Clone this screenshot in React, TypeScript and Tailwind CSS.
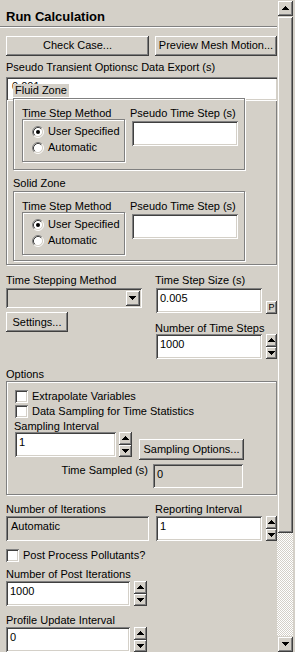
import React from "react";

const RAISED =
  "shadow-[inset_-1px_-1px_#404040,inset_1px_1px_#ffffff,inset_-2px_-2px_#808080,inset_2px_2px_#d4d0c8]";
const RAISED_SB =
  "shadow-[inset_1px_1px_#d4d0c8,inset_-1px_-1px_#404040,inset_2px_2px_#ffffff,inset_-2px_-2px_#808080]";
const SUNKEN =
  "shadow-[inset_1px_1px_#808080,inset_-1px_-1px_#ffffff,inset_2px_2px_#404040,inset_-2px_-2px_#d4d0c8]";
const ETCHED = "border border-[#808080] shadow-[inset_1px_1px_#ffffff,1px_1px_#ffffff]";

function ArrowUp() {
  return (
    <svg width="7" height="4" viewBox="0 0 7 4" shapeRendering="crispEdges" fill="#000">
      <rect x="3" y="0" width="1" height="1" />
      <rect x="2" y="1" width="3" height="1" />
      <rect x="1" y="2" width="5" height="1" />
      <rect x="0" y="3" width="7" height="1" />
    </svg>
  );
}

function ArrowDown() {
  return (
    <svg width="7" height="4" viewBox="0 0 7 4" shapeRendering="crispEdges" fill="#000">
      <rect x="0" y="0" width="7" height="1" />
      <rect x="1" y="1" width="5" height="1" />
      <rect x="2" y="2" width="3" height="1" />
      <rect x="3" y="3" width="1" height="1" />
    </svg>
  );
}

function Spinner({ className }: { className: string }) {
  return (
    <div className={`flex flex-col shrink-0 ${className}`}>
      <div className={`flex-1 flex items-center justify-center bg-[#d4d0c8] ${RAISED}`}>
        <ArrowUp />
      </div>
      <div className={`flex-1 flex items-center justify-center bg-[#d4d0c8] ${RAISED}`}>
        <ArrowDown />
      </div>
    </div>
  );
}

function Field({
  className,
  children,
  disabled,
}: {
  className: string;
  children?: React.ReactNode;
  disabled?: boolean;
}) {
  return (
    <div
      className={`shrink-0 pl-[4px] pt-[4px] leading-[13px] whitespace-nowrap ${
        disabled ? "bg-[#d4d0c8]" : "bg-white"
      } ${SUNKEN} ${className}`}
    >
      {children}
    </div>
  );
}

function Radio({ checked }: { checked?: boolean }) {
  return (
    <svg width="12" height="12" viewBox="0 0 12 12" className="shrink-0">
      <circle cx="6" cy="6" r="4.5" fill="#fff" />
      <path d="M2.11 9.89 A5.5 5.5 0 0 1 9.89 2.11" fill="none" stroke="#808080" strokeWidth="1" />
      <path d="M9.89 2.11 A5.5 5.5 0 0 1 2.11 9.89" fill="none" stroke="#ffffff" strokeWidth="1" />
      <path d="M2.82 9.18 A4.5 4.5 0 0 1 9.18 2.82" fill="none" stroke="#404040" strokeWidth="1" />
      <path d="M9.18 2.82 A4.5 4.5 0 0 1 2.82 9.18" fill="none" stroke="#d4d0c8" strokeWidth="1" />
      {checked && <circle cx="6" cy="6" r="2" fill="#000" />}
    </svg>
  );
}

function Checkbox() {
  return <div className={`w-[13px] h-[13px] bg-white shrink-0 ${SUNKEN}`} />;
}

function ZoneGroup({ className }: { className: string }) {
  return (
    <div className={`relative bg-[#d4d0c8] w-[232px] pt-[8px] pl-[8px] flex ${ETCHED} ${className}`}>
      <div className="flex flex-col">
        <div className="h-[12px] leading-[12px] whitespace-nowrap">Time Step Method</div>
        <div className={`w-[103px] h-[43px] pt-[4px] pl-[9px] flex flex-col ${ETCHED}`}>
          <div className="h-[16px] flex items-center gap-[4px] whitespace-nowrap">
            <Radio checked />
            <span className="leading-[13px]">User Specified</span>
          </div>
          <div className="h-[16px] flex items-center gap-[4px] whitespace-nowrap">
            <Radio />
            <span className="leading-[13px]">Automatic</span>
          </div>
        </div>
      </div>
      <div className="flex flex-col ml-[5px]">
        <div className="h-[12px] leading-[12px] whitespace-nowrap">Pseudo Time Step (s)</div>
        <Field className="mt-[2px] ml-[2px] w-[106px] h-[25px]" />
      </div>
    </div>
  );
}

function Button({ className, children }: { className: string; children: React.ReactNode }) {
  return (
    <div
      className={`shrink-0 flex items-center justify-center whitespace-nowrap leading-[13px] bg-[#d4d0c8] ${RAISED} ${className}`}
    >
      {children}
    </div>
  );
}

export default function App() {
  return (
    <div className="w-[295px] h-[652px] overflow-hidden bg-[#d4d0c8] flex font-['Liberation_Sans',Arial,sans-serif] text-[11px] text-black">
      <div className="w-[277px] shrink-0 flex flex-col items-start overflow-hidden">
        {/* Title */}
        <div className="h-[26px] pl-[6px] pt-[9px] text-[13px] font-bold leading-[16px] whitespace-nowrap">
          Run Calculation
        </div>
        <div className="w-[277px] h-px bg-[#808080]" />
        <div className="w-[277px] h-px bg-white" />

        {/* Buttons */}
        <div className="mt-[8px] pl-[6px] flex gap-[6px]">
          <Button className="w-[143px] h-[20px]">Check Case...</Button>
          <Button className="w-[122px] h-[20px]">Preview Mesh Motion...</Button>
        </div>

        <div className="mt-[5px] pl-[6px] h-[13px] leading-[13px] whitespace-nowrap">
          Pseudo Transient Optionsc Data Export (s)
        </div>

        {/* Pseudo transient group */}
        <div className={`mt-[3px] ml-[6px] w-[271px] h-[192px] relative pt-[20px] pl-[6px] flex flex-col items-start ${ETCHED}`}>
          <div
            className={`absolute -left-px -top-px w-[272px] h-[24px] bg-white pl-[6px] pt-[3px] leading-[13px] ${SUNKEN}`}
          >
            0.001
          </div>
          <div className="absolute left-[6px] top-[6px] px-[2px] h-[13px] leading-[13px] bg-[#d4d0c8] whitespace-nowrap">
            Fluid Zone
          </div>
          <ZoneGroup className="h-[72px]" />
          <div className="mt-[7px] h-[13px] leading-[13px] whitespace-nowrap">Solid Zone</div>
          <ZoneGroup className="mt-[1px] h-[70px]" />
        </div>

        {/* Time stepping */}
        <div className="mt-[9px] pl-[6px] flex">
          <div className="w-[149px] flex flex-col items-start">
            <div className="h-[14px] leading-[13px] whitespace-nowrap">Time Stepping Method</div>
            <div className={`w-[136px] h-[20px] bg-[#d4d0c8] flex items-center justify-end pr-[2px] ${SUNKEN}`}>
              <div className={`w-[15px] h-[16px] flex items-center justify-center bg-[#d4d0c8] ${RAISED_SB}`}>
                <ArrowDown />
              </div>
            </div>
            <Button className="mt-[4px] w-[62px] h-[20px]">Settings...</Button>
          </div>
          <div className="w-[122px] flex flex-col items-start">
            <div className="h-[14px] leading-[13px] whitespace-nowrap">Time Step Size (s)</div>
            <div className="flex items-start">
              <Field className="ml-[1px] w-[106px] h-[25px]">0.005</Field>
              <Button className="ml-[4px] mt-[13px] w-[11px] h-[13px] text-[9px]">P</Button>
            </div>
            <div className="mt-[8px] h-[12px] leading-[12px] whitespace-nowrap">Number of Time Steps</div>
            <div className="flex items-start">
              <Field className="ml-[1px] w-[106px] h-[25px]">1000</Field>
              <Spinner className="ml-[4px] w-[11px] h-[25px]" />
            </div>
          </div>
        </div>

        {/* Options */}
        <div className="mt-[9px] pl-[6px] h-[13px] leading-[13px] whitespace-nowrap">Options</div>
        <div className={`ml-[6px] w-[271px] h-[116px] pt-[8px] pl-[8px] flex flex-col items-start ${ETCHED}`}>
          <div className="h-[13px] flex items-center gap-[4px] whitespace-nowrap">
            <Checkbox />
            <span className="leading-[13px]">Extrapolate Variables</span>
          </div>
          <div className="mt-[2px] h-[13px] flex items-center gap-[4px] whitespace-nowrap">
            <Checkbox />
            <span className="leading-[13px]">Data Sampling for Time Statistics</span>
          </div>
          <div className="mt-[2px] -ml-px h-[12px] leading-[12px] whitespace-nowrap">Sampling Interval</div>
          <div className="flex items-start">
            <Field className="w-[101px] h-[25px]">1</Field>
            <Spinner className="ml-[3px] w-[13px] h-[25px]" />
            <Button className="ml-[7px] mt-[7px] w-[105px] h-[21px]">Sampling Options...</Button>
          </div>
          <div className="mt-[4px] flex items-start">
            <div className="w-[133px] text-right leading-[13px] whitespace-nowrap">Time Sampled (s)</div>
            <Field disabled className="ml-[5px] w-[90px] h-[24px]">
              0
            </Field>
          </div>
        </div>

        {/* Iterations */}
        <div className="mt-[8px] pl-[6px] flex">
          <div className="w-[149px] flex flex-col items-start">
            <div className="h-[13px] leading-[13px] whitespace-nowrap">Number of Iterations</div>
            <Field disabled className="w-[143px] h-[25px] !pl-[5px]">
              Automatic
            </Field>
          </div>
          <div className="w-[122px] flex flex-col items-start">
            <div className="h-[13px] leading-[13px] whitespace-nowrap">Reporting Interval</div>
            <div className="flex items-start">
              <Field className="ml-[1px] w-[106px] h-[25px]">1</Field>
              <Spinner className="ml-[4px] w-[11px] h-[25px]" />
            </div>
          </div>
        </div>

        <div className="mt-[8px] pl-[6px] h-[13px] flex items-center gap-[4px] whitespace-nowrap">
          <Checkbox />
          <span className="leading-[13px]">Post Process Pollutants?</span>
        </div>

        <div className="mt-[6px] pl-[6px] h-[13px] leading-[13px] whitespace-nowrap">
          Number of Post Iterations
        </div>
        <div className="pl-[6px] flex items-start">
          <Field className="w-[124px] h-[25px]">1000</Field>
          <Spinner className="ml-[4px] w-[13px] h-[25px]" />
        </div>

        <div className="mt-[8px] pl-[6px] h-[13px] leading-[13px] whitespace-nowrap">
          Profile Update Interval
        </div>
        <div className="pl-[6px] flex items-start">
          <Field className="w-[124px] h-[25px]">0</Field>
          <Spinner className="ml-[4px] w-[13px] h-[25px]" />
        </div>
      </div>

      {/* Scrollbar */}
      <div className="w-[16px] shrink-0 flex flex-col h-[652px]">
        <div className={`h-[16px] shrink-0 flex items-center justify-center bg-[#d4d0c8] ${RAISED_SB}`}>
          <ArrowUp />
        </div>
        <div className={`h-[517px] shrink-0 bg-[#d4d0c8] ${RAISED_SB}`} />
        <div className="flex-1 bg-[repeating-conic-gradient(#ffffff_0%_25%,#d4d0c8_0%_50%)] bg-[length:2px_2px]" />
        <div className={`h-[16px] shrink-0 flex items-center justify-center bg-[#d4d0c8] ${RAISED_SB}`}>
          <ArrowDown />
        </div>
      </div>
      <div className="w-[2px] shrink-0" />
    </div>
  );
}
